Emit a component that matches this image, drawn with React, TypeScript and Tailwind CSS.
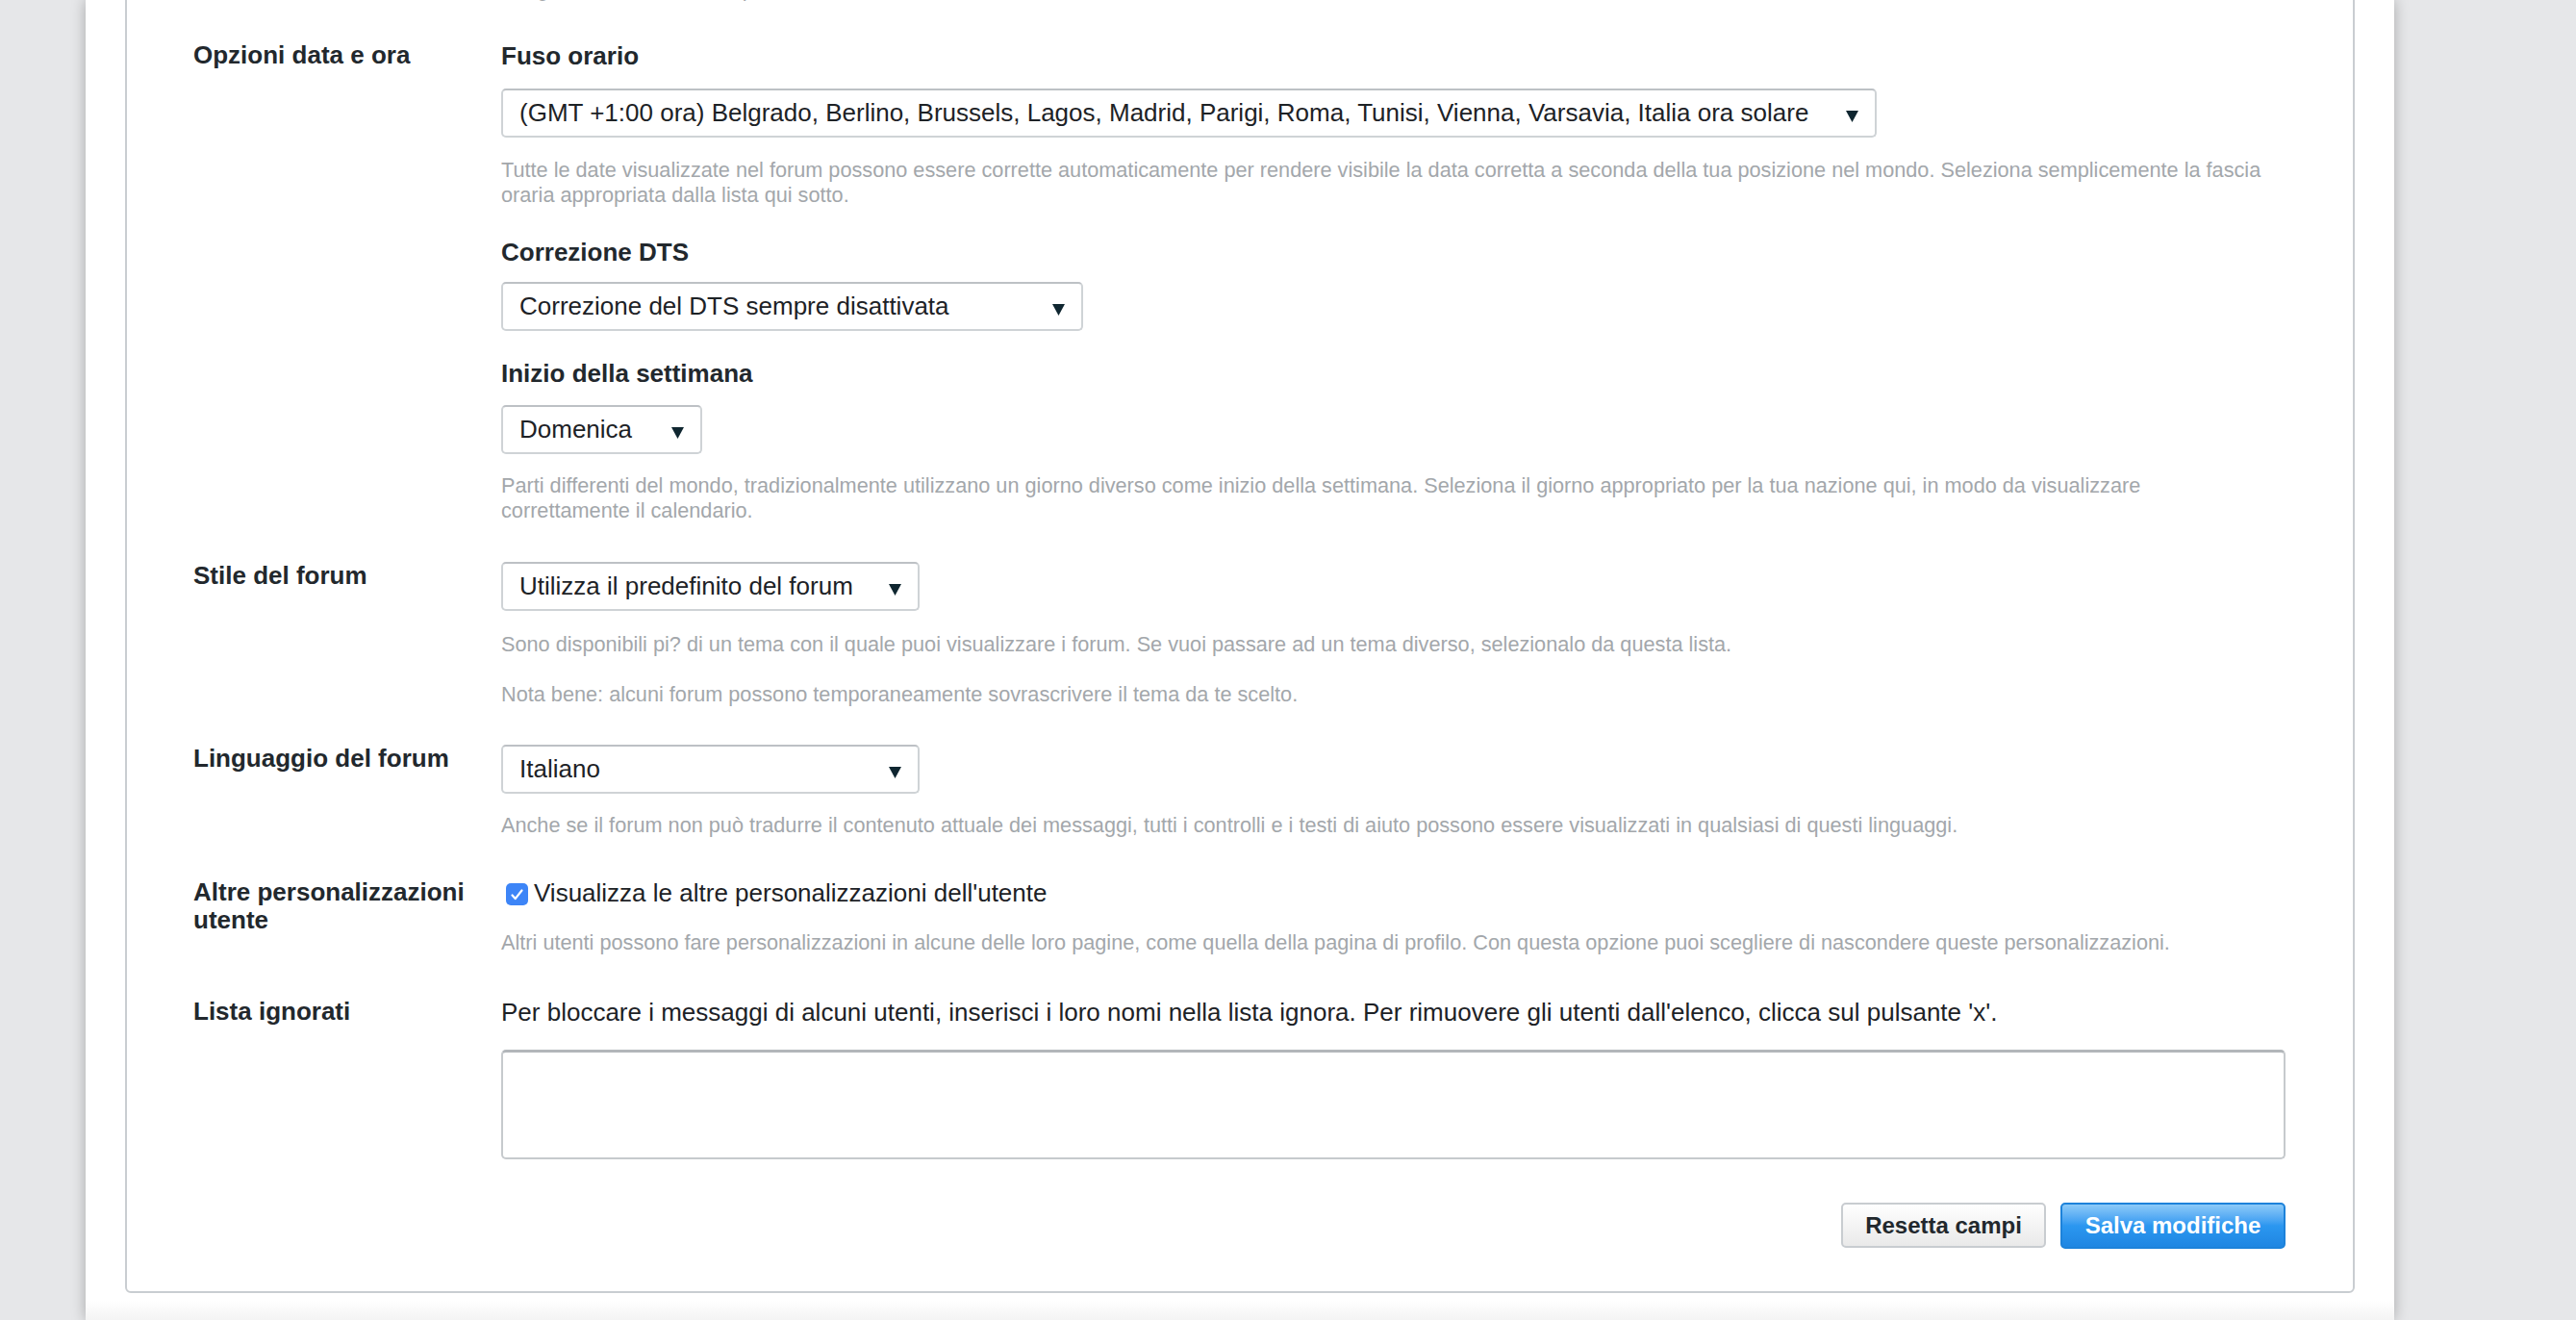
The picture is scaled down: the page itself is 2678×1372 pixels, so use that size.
import { ReactNode } from 'react';

interface SelectBoxProps {
  value: string;
  className: string;
}

function SelectBox({ value, className }: SelectBoxProps) {
  return (
    <div
      className={`${className} h-[51px] flex items-center justify-between pl-[17px] pr-[17px] bg-white border-2 border-[#cfd3d6] border-t-[#bdc1c5] rounded-[5px] text-[26px] text-[#1d2226]`}
    >
      <span className="whitespace-nowrap">{value}</span>
      <svg width="13" height="12" viewBox="0 0 13 12" className="mt-[6px] shrink-0">
        <path d="M0 0h13L6.5 12z" fill="#0f2630" />
      </svg>
    </div>
  );
}

function Help({ children, className = '' }: { children: ReactNode; className?: string }) {
  return <p className={`${className} text-[21.7px] leading-[26px] text-[#a3a7ab]`}>{children}</p>;
}

function Title({ children, className = '' }: { children: ReactNode; className?: string }) {
  return <h4 className={`${className} text-[26px] leading-[30px] font-bold text-[#22282d]`}>{children}</h4>;
}

function Row({ label, className, children }: { label: ReactNode; className: string; children: ReactNode }) {
  return (
    <div className={`${className} grid grid-cols-[300px_1fr] gap-x-[20px]`}>
      <div className="text-[26px] leading-[29px] font-bold text-[#22282d]">{label}</div>
      <div>{children}</div>
    </div>
  );
}

export default function App() {
  return (
    <div
      className="h-[1372px] overflow-hidden bg-[#e6e7e9]"
      style={{ fontFamily: '"Liberation Sans", Arial, Helvetica, sans-serif' }}
    >
      <div className="ml-[89px] w-[2400px] h-full flex flex-col bg-white shadow-[0_0_14px_rgba(0,0,0,0.28)]">
        <div className="mx-[41px] mt-[-60px] border-2 border-[#c9cdd1] rounded-[6px] pt-[34px] pb-[44px] pl-[69px] pr-[70px]">
          <Row label="" className="">
            <Help>
              Scegli la modalità con cui preferisci visualizzare le discussioni: lineare, ibrida o ad albero, in base alle tue abitudini di lettura nel forum.
            </Help>
          </Row>

          <Row label="Opzioni data e ora" className="mt-[41px]">
            <Title>Fuso orario</Title>
            <SelectBox
              className="mt-[19px] w-[1430px]"
              value="(GMT +1:00 ora) Belgrado, Berlino, Brussels, Lagos, Madrid, Parigi, Roma, Tunisi, Vienna, Varsavia, Italia ora solare"
            />
            <Help className="mt-[21px]">
              Tutte le date visualizzate nel forum possono essere corrette automaticamente per rendere visibile la data corretta a seconda della tua posizione nel mondo. Seleziona semplicemente la fascia
              <br />
              oraria appropriata dalla lista qui sotto.
            </Help>

            <Title className="mt-[31px]">Correzione DTS</Title>
            <SelectBox className="mt-[16px] w-[605px]" value="Correzione del DTS sempre disattivata" />

            <Title className="mt-[29px]">Inizio della settimana</Title>
            <SelectBox className="mt-[18px] w-[209px]" value="Domenica" />
            <Help className="mt-[20px]">
              Parti differenti del mondo, tradizionalmente utilizzano un giorno diverso come inizio della settimana. Seleziona il giorno appropriato per la tua nazione qui, in modo da visualizzare
              <br />
              correttamente il calendario.
            </Help>
          </Row>

          <Row label="Stile del forum" className="mt-[40px]">
            <SelectBox className="w-[435px]" value="Utilizza il predefinito del forum" />
            <Help className="mt-[22px]">
              Sono disponibili pi? di un tema con il quale puoi visualizzare i forum. Se vuoi passare ad un tema diverso, selezionalo da questa lista.
            </Help>
            <Help className="mt-[26px]">Nota bene: alcuni forum possono temporaneamente sovrascrivere il tema da te scelto.</Help>
          </Row>

          <Row label="Linguaggio del forum" className="mt-[39px]">
            <SelectBox className="w-[435px]" value="Italiano" />
            <Help className="mt-[20px]">
              Anche se il forum non può tradurre il contenuto attuale dei messaggi, tutti i controlli e i testi di aiuto possono essere visualizzati in qualsiasi di questi linguaggi.
            </Help>
          </Row>

          <Row label="Altre personalizzazioni utente" className="mt-[42px]">
            <label className="h-[30px] flex items-center text-[26px] text-[#1d2226]">
              <span className="ml-[5px] mr-[6px] mt-[3px] w-[23px] h-[23px] rounded-[5px] bg-[#3d85f7] flex items-center justify-center">
                <svg width="13" height="12" viewBox="0 0 13 12">
                  <path d="M1.5 6.5l3.2 3.6L11.5 1.5" fill="none" stroke="white" strokeWidth="2.2" strokeLinecap="round" strokeLinejoin="round" />
                </svg>
              </span>
              Visualizza le altre personalizzazioni dell'utente
            </label>
            <Help className="mt-[24px]">
              Altri utenti possono fare personalizzazioni in alcune delle loro pagine, come quella della pagina di profilo. Con questa opzione puoi scegliere di nascondere queste personalizzazioni.
            </Help>
          </Row>

          <Row label="Lista ignorati" className="mt-[44px]">
            <p className="text-[26px] leading-[30px] text-[#1d2226]">
              Per bloccare i messaggi di alcuni utenti, inserisci i loro nomi nella lista ignora. Per rimuovere gli utenti dall'elenco, clicca sul pulsante 'x'.
            </p>
            <textarea
              readOnly
              className="block mt-[24px] w-full h-[114px] resize-none bg-white border-2 border-[#c6cacd] border-t-[3px] border-t-[#b2b6ba] rounded-[5px] outline-none"
            />
          </Row>

          <div className="mt-[45px] flex justify-end gap-[15px]">
            <button className="w-[213px] h-[47px] border-2 border-[#c8ccd0] rounded-[5px] bg-linear-to-b from-white to-[#e9e9e9] text-[24px] font-bold text-[#22282d]">
              Resetta campi
            </button>
            <button className="w-[234px] h-[48px] border-2 border-[#1d82da] rounded-[5px] bg-linear-to-b from-[#8ccaf8] via-[#2b97f0] to-[#1f86e2] text-[24px] font-bold text-white">
              Salva modifiche
            </button>
          </div>
        </div>
        <div className="mt-[8px] h-[40px] shrink-0 bg-linear-to-b from-white to-[#e8e8e8]" />
      </div>
    </div>
  );
}
